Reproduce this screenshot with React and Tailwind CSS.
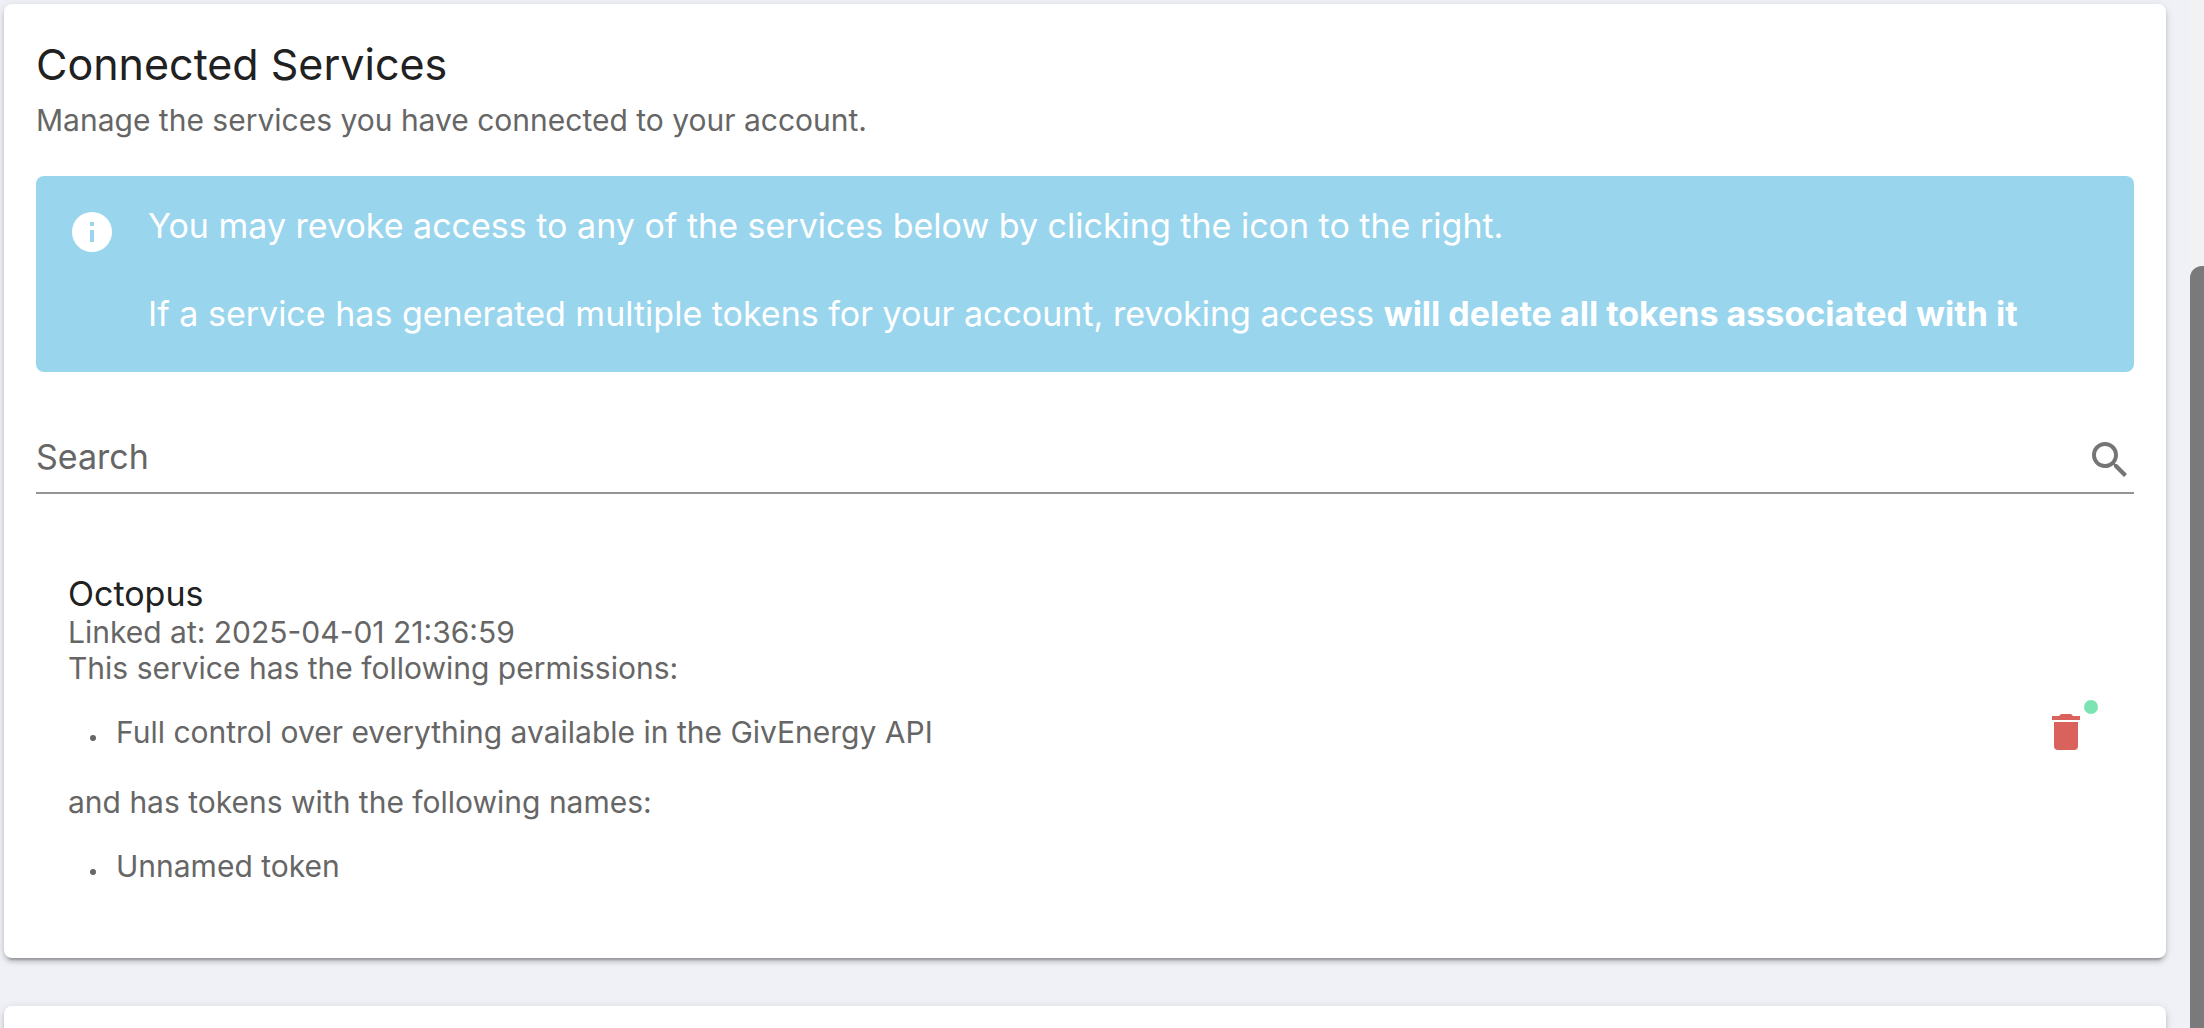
import React, { useState } from 'react';

const services = [
  {
    name: 'Octopus',
    linkedAt: '2025-04-01 21:36:59',
    permissions: ['Full control over everything available in the GivEnergy API'],
    tokens: ['Unnamed token'],
  },
];

const InfoIcon = () => (
  <svg viewBox="0 0 24 24" className="mt-1 size-12 shrink-0 fill-white" aria-hidden="true">
    <path d="M13,9H11V7H13M13,17H11V11H13M12,2A10,10 0 0,0 2,12A10,10 0 0,0 12,22A10,10 0 0,0 22,12A10,10 0 0,0 12,2Z" />
  </svg>
);

const SearchIcon = () => (
  <svg viewBox="0 0 24 24" className="size-12 shrink-0 fill-[#757575]" aria-hidden="true">
    <path d="M9.5,3A6.5,6.5 0 0,1 16,9.5C16,11.11 15.41,12.59 14.44,13.73L14.71,14H15.5L20.5,19L19,20.5L14,15.5V14.71L13.73,14.44C12.59,15.41 11.11,16 9.5,16A6.5,6.5 0 0,1 3,9.5A6.5,6.5 0 0,1 9.5,3M9.5,5C7,5 5,7 5,9.5C5,12 7,14 9.5,14C12,14 14,12 14,9.5C14,7 12,5 9.5,5Z" />
  </svg>
);

const DeleteIcon = () => (
  <svg viewBox="0 0 24 24" className="size-12 fill-[#d9635c]" aria-hidden="true">
    <path d="M19,4H15.5L14.5,3H9.5L8.5,4H5V6H19M6,19A2,2 0 0,0 8,21H16A2,2 0 0,0 18,19V7H6V19Z" />
  </svg>
);

const Card = ({ children }) => (
  <section className="rounded-lg bg-white px-8 pt-8 pb-10 shadow-[0_6px_2px_-4px_rgba(0,0,0,0.2),0_4px_4px_0_rgba(0,0,0,0.14),0_2px_10px_0_rgba(0,0,0,0.12)]">
    {children}
  </section>
);

const BulletList = ({ items }) => (
  <ul className="pt-7 pl-[22px]">
    {items.map((item) => (
      <li
        key={item}
        className="flex items-center gap-5 before:mt-3 before:size-1.5 before:shrink-0 before:rounded-full before:bg-[#666666]"
      >
        {item}
      </li>
    ))}
  </ul>
);

const ServiceItem = ({ service }) => (
  <li className="flex items-center justify-between px-8">
    <div className="pb-1.5 text-[30px] leading-9 text-[#666666]">
      <h3 className="text-[34px] leading-10 text-[#212121]">{service.name}</h3>
      <p>Linked at: {service.linkedAt}</p>
      <p>This service has the following permissions:</p>
      <BulletList items={service.permissions} />
      <p className="pt-[34px]">and has tokens with the following names:</p>
      <BulletList items={service.tokens} />
    </div>
    <button type="button" aria-label={`Revoke access for ${service.name}`} className="relative p-3">
      <DeleteIcon />
      <span className="absolute top-1 right-1 size-3.5 rounded-full bg-[#7ce4b3]" />
    </button>
  </li>
);

const App = () => {
  const [search, setSearch] = useState('');

  const visible = services.filter((service) =>
    service.name.toLowerCase().includes(search.toLowerCase())
  );

  return (
    <div className="flex h-screen overflow-hidden bg-[#eff1f6] font-['Inter','Open_Sans',sans-serif]">
      <main className="flex min-w-0 flex-1 flex-col gap-12 overflow-hidden pt-1 pr-6 pl-1">
        <Card>
          <h2 className="text-[43px] leading-14 text-[#212121]">Connected Services</h2>
          <p className="pt-1 text-[30px] leading-12 text-[#666666]">
            Manage the services you have connected to your account.
          </p>

          {/* Notice */}
          <div className="mt-8 flex gap-8 rounded-lg bg-[#9ad5ee] px-8 pt-7 pb-9 text-[34px] leading-11 text-white">
            <InfoIcon />
            <div>
              <p>You may revoke access to any of the services below by clicking the icon to the right.</p>
              <br />
              <p>
                If a service has generated multiple tokens for your account, revoking access{' '}
                <strong className="font-bold">will delete all tokens associated with it</strong>
              </p>
            </div>
          </div>

          {/* Search */}
          <div className="mt-14 flex items-center border-b-2 border-[#949494] pt-2 pb-2">
            <input
              type="text"
              aria-label="Search"
              placeholder="Search"
              value={search}
              onChange={(e) => setSearch(e.target.value)}
              className="h-12 min-w-0 flex-1 pb-2 text-[34px] text-[#212121] outline-none placeholder:text-[#666666]"
            />
            <SearchIcon />
          </div>

          {/* Services */}
          <ul className="pt-20 pb-7">
            {visible.map((service) => (
              <ServiceItem key={service.name} service={service} />
            ))}
          </ul>
        </Card>

        <Card />
      </main>

      {/* Scrollbar */}
      <div className="w-3.5 shrink-0 bg-[#f2f2f2] pt-[266px]">
        <div className="h-full rounded-tl-xl bg-[#7a7a7a]" />
      </div>
    </div>
  );
};

export default App;
